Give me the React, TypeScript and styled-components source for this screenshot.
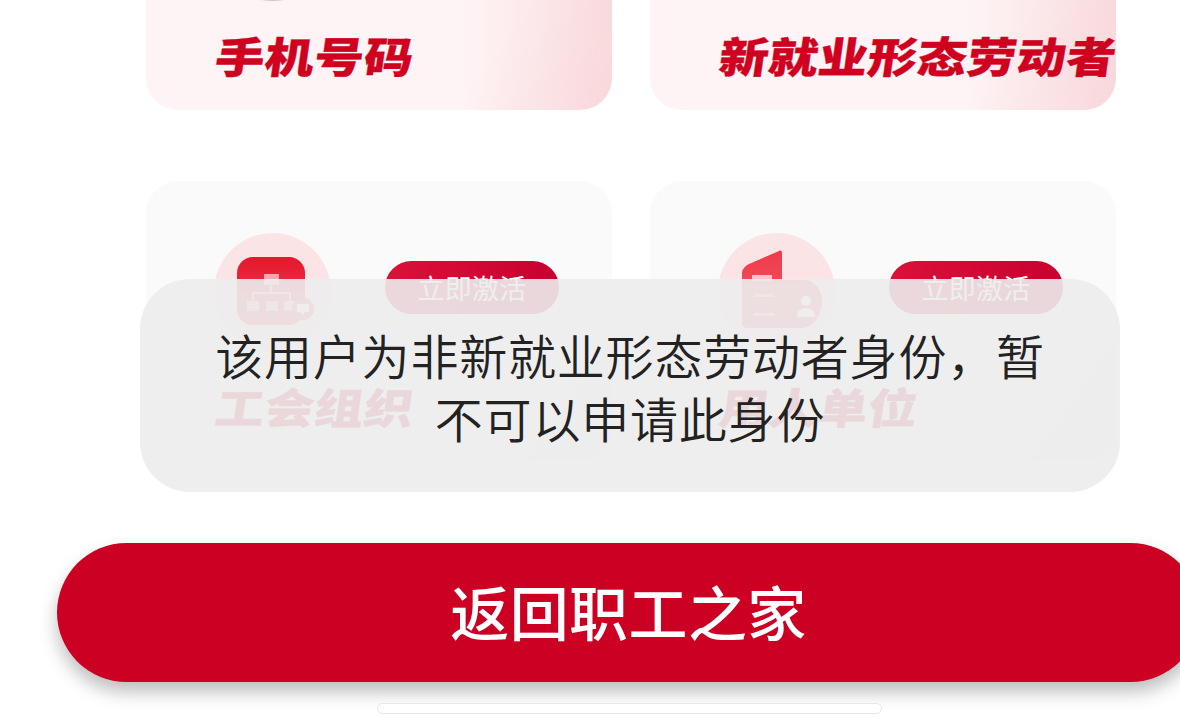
import React from "react";
import styled, { createGlobalStyle } from "styled-components";

const cjk = `"Noto Sans CJK SC", "Noto Sans", sans-serif`;

const identities = [
  { title: "手机号码", done: true, tip: true, icon: null },
  { title: "新就业形态劳动者", done: true, tip: false, icon: null },
  { title: "工会组织", done: false, tip: false, icon: "org" },
  { title: "用人单位", done: false, tip: false, icon: "card" },
];

const OrgIcon = () => (
  <svg width="84" height="80" viewBox="0 0 84 80">
    <defs>
      <linearGradient id="orgFill" x1="0" y1="0" x2="0" y2="1">
        <stop offset="0" stopColor="#e5162c" />
        <stop offset="1" stopColor="#f04a58" />
      </linearGradient>
    </defs>
    <rect x="0" y="0" width="68" height="68" rx="16" fill="url(#orgFill)" />
    <rect x="27" y="17" width="15" height="11" fill="#f8a7ae" />
    <path d="M34 28v8M16 44v-8h37v8" stroke="#f9a9b0" strokeWidth="2" fill="none" />
    <rect x="10" y="44" width="12" height="10" fill="#f9a9b0" />
    <rect x="29" y="44" width="12" height="10" fill="#f9a9b0" />
    <rect x="47" y="44" width="12" height="10" fill="#f9a9b0" />
    <circle cx="66" cy="52" r="11" fill="#f4505e" />
    <path d="M60 47h12v8h-4l-2 3-2-3h-4z" fill="#fff" />
  </svg>
);

const CardIcon = () => (
  <svg width="84" height="80" viewBox="0 0 84 80">
    <defs>
      <linearGradient id="cardFill" x1="0" y1="0" x2="0" y2="1">
        <stop offset="0" stopColor="#ee3a4a" />
        <stop offset="1" stopColor="#f4606c" />
      </linearGradient>
    </defs>
    <path
      d="M0 24c0-5 3-8 7-10L37 1c2-1 3 0 3 2v27h22c10 0 18 10 18 20 0 14-8 28-20 28H6c-4 0-6-2-6-6z"
      fill="url(#cardFill)"
    />
    <rect x="10" y="25" width="20" height="6" fill="#fbc4c9" />
    <rect x="12" y="44" width="20" height="3" fill="#f9a9b0" />
    <rect x="12" y="63" width="20" height="3" fill="#f9a9b0" />
    <circle cx="64" cy="51" r="5" fill="#fff" />
    <path d="M55 67c0-6 4-9 9-9s9 3 9 9z" fill="#fff" />
  </svg>
);

export default function App() {
  return (
    <>
      <GlobalStyle />
      <Page>
        <CardGrid>
          {identities.map((item) => (
            <Card key={item.title} $done={item.done}>
              <CardTop>
                <IconCircle
                  $tip={item.tip}
                  $left={item.icon === "card" ? 24 : 23}
                  $top={item.icon === "card" ? 17 : 24}
                >
                  {item.icon === "org" && <OrgIcon />}
                  {item.icon === "card" && <CardIcon />}
                </IconCircle>
                {!item.done && <ActivateButton>立即激活</ActivateButton>}
              </CardTop>
              <CardTitle>{item.title}</CardTitle>
            </Card>
          ))}
        </CardGrid>
        <BackButton>返回职工之家</BackButton>
        <HomeBar />
        <Toast>该用户为非新就业形态劳动者身份，暂不可以申请此身份</Toast>
      </Page>
    </>
  );
}

const GlobalStyle = createGlobalStyle`
  html, body {
    margin: 0;
    padding: 0;
    background: #fff;
  }
  * {
    box-sizing: border-box;
  }
`;

const Page = styled.div`
  position: relative;
  width: 1180px;
  height: 717px;
  overflow: hidden;
  background: #fff;
  font-family: ${cjk};
`;

const CardGrid = styled.div`
  display: grid;
  grid-template-columns: 466px 466px;
  grid-template-rows: 280px 280px;
  column-gap: 38px;
  row-gap: 71px;
  margin: -170px 0 0 146px;
`;

const Card = styled.div<{ $done: boolean }>`
  padding: 52px 0 0 68px;
  border-radius: 32px;
  background: ${(p) =>
    p.$done
      ? "linear-gradient(125deg, rgba(255,255,255,0) 76%, rgba(248,205,210,.3) 100%), linear-gradient(90deg, #fef4f5 0%, #fef4f5 68%, #f9dcdf 100%)"
      : "linear-gradient(125deg, #fafafa 84%, #fde3e6 100%)"};
`;

const CardTop = styled.div`
  display: flex;
  align-items: flex-start;
  gap: 54px;
  height: 117px;
`;

const IconCircle = styled.div<{ $tip: boolean; $left: number; $top: number }>`
  flex: none;
  padding: ${(p) => `${p.$top}px 0 0 ${p.$left}px`};
  width: 117px;
  height: 117px;
  border-radius: 50%;
  background: #fbe4e6;
  box-shadow: ${(p) => (p.$tip ? "0 2px 1px rgba(0,0,0,.2)" : "none")};

  svg {
    display: block;
    overflow: visible;
  }
`;

const ActivateButton = styled.div`
  margin-top: 28px;
  width: 174px;
  height: 53px;
  border-radius: 27px;
  background: linear-gradient(90deg, #da1238, #c80030);
  color: #fff;
  font-size: 27px;
  line-height: 53px;
  text-align: center;
  letter-spacing: 0.2px;
`;

const CardTitle = styled.div`
  margin: 28px 0 0 2px;
  font-size: 49px;
  line-height: 56px;
  font-weight: 900;
  letter-spacing: 0.6px;
  white-space: nowrap;
  color: #d0001f;
  -webkit-text-stroke: 0.5px #d0001f;
  transform: skewX(-8deg) scaleY(0.86);
  transform-origin: left center;
`;

const BackButton = styled.div`
  margin: 82px 0 0 57px;
  width: 1143px;
  height: 139px;
  border-radius: 70px;
  background: #cc0022;
  box-shadow: 0 10px 18px rgba(0, 0, 0, 0.26);
  color: #fff;
  font-size: 59px;
  font-weight: 500;
  line-height: 136px;
  letter-spacing: 0.4px;
  text-align: center;
`;

const HomeBar = styled.div`
  margin: 21px 0 0 377px;
  width: 505px;
  height: 11px;
  border-radius: 6px;
  background: #fff;
  border: 1px solid #e6e6e6;
`;

const Toast = styled.div`
  position: absolute;
  left: 140px;
  top: 279px;
  width: 980px;
  height: 213px;
  padding: 44px 70px 0;
  border-radius: 50px;
  background: rgba(236, 236, 236, 0.91);
  color: #222;
  font-size: 48px;
  font-weight: 350;
  line-height: 63px;
  letter-spacing: 0.8px;
  text-align: center;
`;
